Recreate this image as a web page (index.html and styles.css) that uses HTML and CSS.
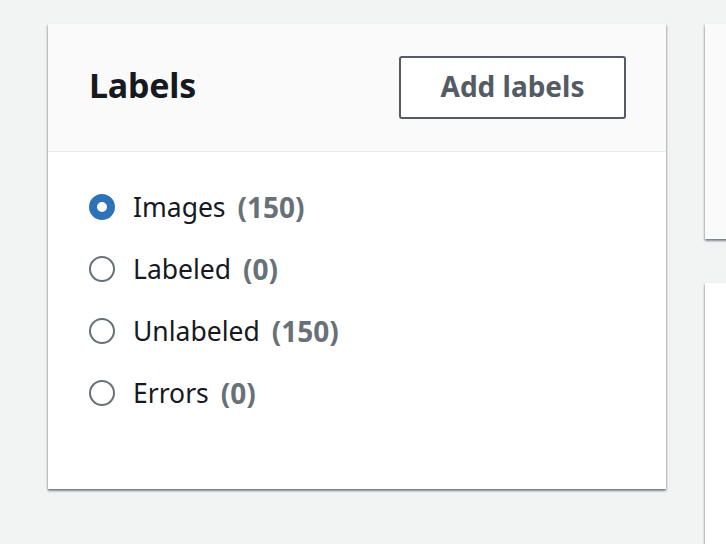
FILE: index.html
```html
<!DOCTYPE html>
<html lang="en">
<head>
<meta charset="utf-8">
<title>Labels</title>
<link rel="stylesheet" href="styles.css">
</head>
<body>
<div class="page">
  <section class="card labels-card">
    <header class="card-header">
      <h2 class="card-title">Labels</h2>
      <button class="btn" type="button">Add labels</button>
    </header>
    <div class="card-body">
      <ul class="radio-list">
        <li class="radio-item checked"><span class="radio"></span><span class="radio-label">Images</span><span class="count">(150)</span></li>
        <li class="radio-item"><span class="radio"></span><span class="radio-label">Labeled</span><span class="count">(0)</span></li>
        <li class="radio-item"><span class="radio"></span><span class="radio-label">Unlabeled</span><span class="count">(150)</span></li>
        <li class="radio-item"><span class="radio"></span><span class="radio-label">Errors</span><span class="count">(0)</span></li>
      </ul>
    </div>
  </section>
  <div class="side">
    <div class="card side-top"></div>
    <div class="card side-bottom"></div>
  </div>
</div>
</body>
</html>
```
FILE: styles.css
```css
html, body {
  margin: 0;
  padding: 0;
  background: #f2f3f3;
  font-family: "Noto Sans", Roboto, sans-serif;
  color: #16191f;
}
.page {
  display: flex;
  align-items: flex-start;
  gap: 39px;
  padding: 24px 0 0 48px;
  height: 544px;
  box-sizing: border-box;
  overflow: hidden;
}
.card {
  background: #fff;
  box-shadow: 0 2px 2px 0 rgba(0, 28, 36, 0.4), 1px 1px 2px 0 rgba(0, 28, 36, 0.15), -1px 1px 2px 0 rgba(0, 28, 36, 0.15);
}
.labels-card {
  width: 618px;
  height: 465px;
  flex: none;
  display: flex;
  flex-direction: column;
}
.card-header {
  height: 127px;
  background: #fafafa;
  border-bottom: 1px solid #eaeded;
  display: flex;
  align-items: center;
  justify-content: space-between;
  padding: 0 40px 0 41px;
  flex: none;
}
.card-title {
  margin: 0;
  font-size: 34px;
  font-weight: 700;
  letter-spacing: -0.2px;
  color: #16191f;
  padding-bottom: 5px;
}
.btn {
  width: 227px;
  height: 63px;
  border: 2px solid #545b64;
  border-radius: 3px;
  background: #fff;
  color: #545b64;
  font-family: inherit;
  font-size: 28px;
  font-weight: 700;
  padding: 0 0 2px;
  margin-bottom: 1px;
}
.card-body {
  padding: 24px 41px;
}
.radio-list {
  list-style: none;
  margin: 0;
  padding: 0;
  display: flex;
  flex-direction: column;
}
.radio-item {
  display: flex;
  align-items: center;
  height: 62px;
  font-size: 26.5px;
}
.radio {
  width: 26px;
  height: 26px;
  box-sizing: border-box;
  border: 2px solid #687078;
  border-radius: 50%;
  margin-right: 18px;
  flex: none;
}
.checked .radio {
  border: 8px solid #2e73b8;
  background: #fff;
}
.radio-label {
  margin-right: 12px;
}
.count {
  font-size: 28px;
  font-weight: 700;
  color: #687078;
}
.side {
  display: flex;
  flex-direction: column;
  gap: 44px;
  width: 200px;
  flex: none;
}
.side-top {
  height: 215px;
  flex: none;
  background: #fafafa;
}
.side-bottom {
  height: 300px;
  flex: none;
}
```
